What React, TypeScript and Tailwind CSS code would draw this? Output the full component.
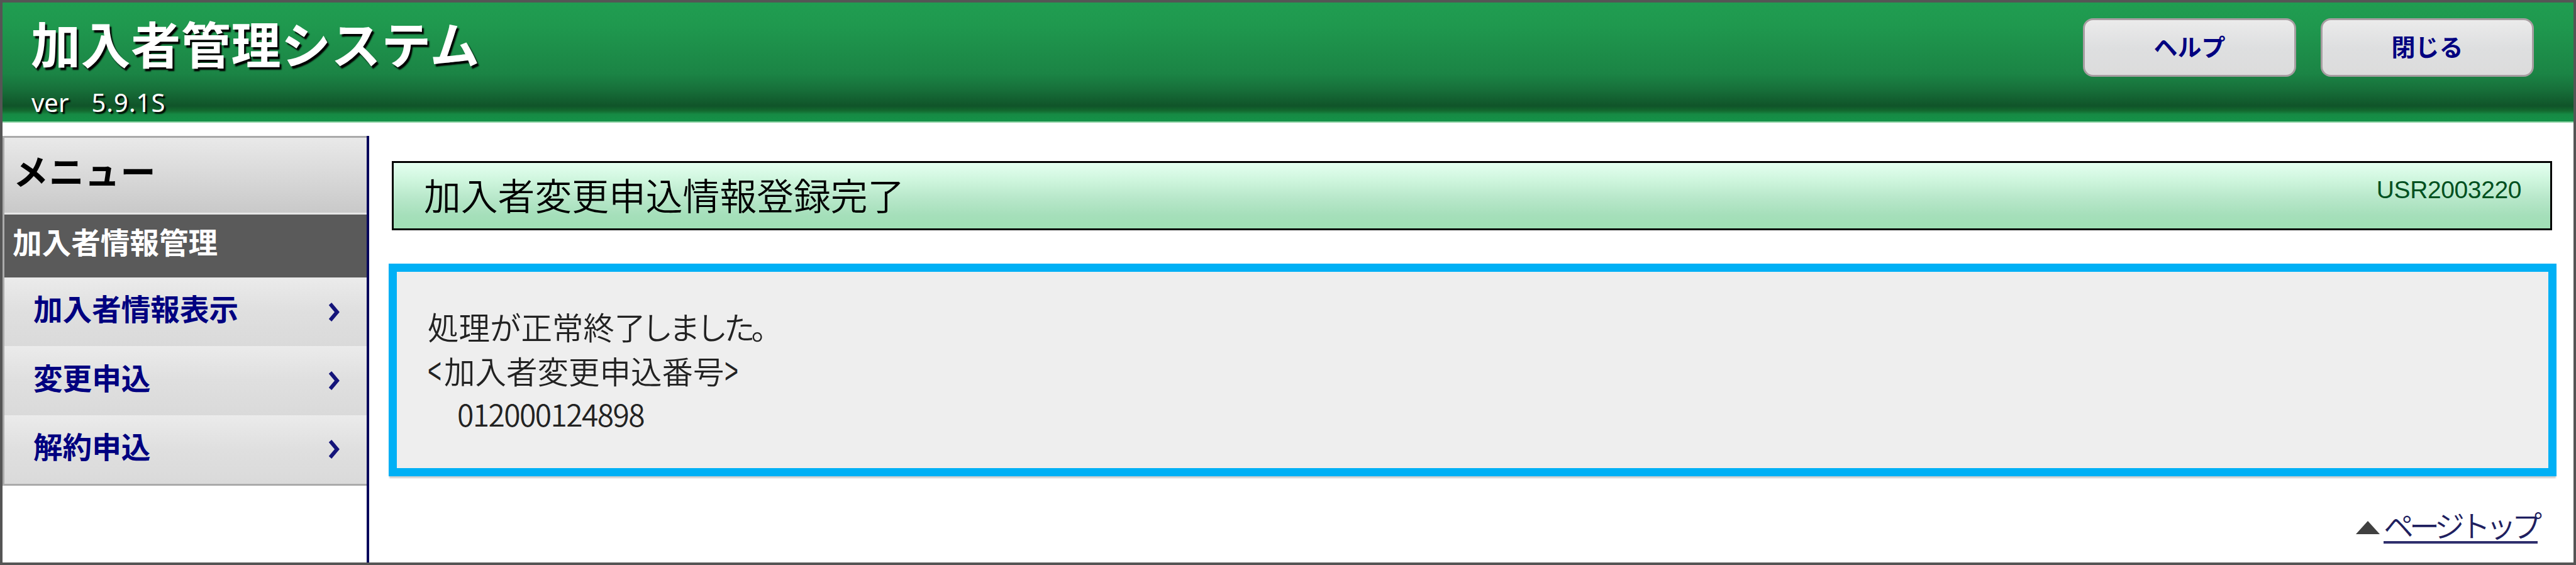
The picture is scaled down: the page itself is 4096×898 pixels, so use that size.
const menuItems = ['加入者情報表示', '変更申込', '解約申込'];

const headerButtons = ['ヘルプ', '閉じる'];

function Header() {
  return (
    <header className="flex h-[191px] shrink-0 items-start justify-between border-b-2 border-[#8fd3a6] bg-[linear-gradient(to_bottom,#209d51_0%,#1f984e_20%,#1b8445_60%,#17703a_73%,#105429_87%,#13692f_91%,#168a44_94%,#149248_100%)] pt-[25px] pr-[63px] pl-[45px] text-white">
      <div>
        <h1 className="-mt-[2px] text-[79px] leading-[82px] font-bold tracking-[0.6px] [text-shadow:3px_4px_2px_#000]">
          加入者管理システム
        </h1>
        <div className="mt-[31px] flex gap-[36px] pl-px font-['Noto_Sans'] text-[40px] leading-[46px] [text-shadow:3px_3px_2px_#000]">
          <span>ver</span>
          <span className="tracking-[1px]">5.9.1S</span>
        </div>
      </div>
      <div className="flex gap-[39px]">
        {headerButtons.map((label) => (
          <button
            key={label}
            className="h-[93px] w-[339px] rounded-[16px] border-[3px] border-[#a79da1] bg-linear-to-b from-[#ebebeb] via-[#dedfe0] to-[#dcdcdc] pb-[6px] text-[38px] leading-none font-bold text-[#000080]"
          >
            {label}
          </button>
        ))}
      </div>
    </header>
  );
}

function Chevron() {
  return (
    <svg viewBox="0 0 18 30" className="h-[30px] w-[18px]" fill="none" stroke="#14147a" strokeWidth="6">
      <path d="M2 2 L13 15 L2 28" />
    </svg>
  );
}

function Sidebar() {
  return (
    <aside className="w-[583px] shrink-0 border-r-4 border-[#08085c]">
      <nav className="border-y-[3px] border-l-[3px] border-[#aaaaaa]">
        <h2 className="flex h-[122px] items-center border-b-[3px] border-[#e6e6e6] bg-linear-to-b from-[#e9e9e9] to-[#c9c9c9] pb-[18px] pl-[14px] text-[56px] leading-none font-bold tracking-[0.8px] text-black">
          メニュー
        </h2>
        <h3 className="flex h-[100px] items-center bg-[#5a5a5a] pb-[16px] pl-[13px] text-[46.6px] leading-none font-bold text-white">
          加入者情報管理
        </h3>
        <ul>
          {menuItems.map((item) => (
            <li
              key={item}
              className="flex h-[109.4px] items-center justify-between bg-linear-to-b from-[#ebebeb] via-[#dfdfdf] to-[#dadada] pr-[42px] pl-[46px] text-[#000080]"
            >
              <span className="pb-[12px] text-[46.6px] leading-none font-bold">{item}</span>
              <Chevron />
            </li>
          ))}
        </ul>
      </nav>
    </aside>
  );
}

function Content() {
  return (
    <main className="min-w-0 flex-1 pt-[40px] pr-[27px] pl-[31px]">
      <div className="mr-[7px] ml-[5px] flex h-[110px] justify-between border-[3px] border-black bg-[linear-gradient(to_bottom,#e4fff0_0%,#cdf5dc_28%,#b9e8cb_52%,#a5dfba_80%,#a0dfb5_100%)] pr-[46px] pl-[48px]">
        <h2 className="pt-[20px] text-[58.8px] leading-[60px] font-[350] text-black">加入者変更申込情報登録完了</h2>
        <span className="pt-[23px] font-['Liberation_Sans'] text-[39px] leading-[40px] tracking-[-0.4px] text-[#00501f]">
          USR2003220
        </span>
      </div>

      <div className="mt-[53px] h-[338px] border-[13px] border-[#00b0f5] bg-[#eeeeee] pt-[52px] pl-[49px] text-[49.5px] leading-[69.5px] font-[350] text-[#222] shadow-[0_4px_2px_-1px_#cfcfcf]">
        <p>
          処理が正常終<span className="tracking-[-6px]">了しました。</span>
        </p>
        <p className="flex">
          <span className="w-[26px] origin-left scale-x-65 font-['Liberation_Sans'] text-[58px]">&lt;</span>
          <span>加入者変更申込番号</span>
          <span className="w-[26px] origin-left scale-x-65 font-['Liberation_Sans'] text-[58px]">&gt;</span>
        </p>
        <p className="pl-[47px] text-[48px] tracking-[-1.6px]">012000124898</p>
      </div>

      <div className="mt-[51px] mr-[30px] flex justify-end gap-[6px]">
        <svg viewBox="0 0 38 21" className="mt-[20px] h-[21px] w-[38px]" fill="#404040">
          <path d="M19 0 L38 21 H0 Z" />
        </svg>
        <a
          href="#"
          className="h-[56px] border-b-4 border-[#2f2f6d] text-[48px] leading-[50px] font-[350] tracking-[-7px] text-[#1f1f60]"
        >
          ページトップ
        </a>
      </div>
    </main>
  );
}

export default function App() {
  return (
    <div
      lang="ja"
      className="flex h-[898px] w-[4096px] flex-col overflow-hidden border-4 border-[#555555] bg-white font-['Noto_Sans_CJK_JP',sans-serif]"
    >
      <Header />
      <div className="mt-[21px] flex min-h-0 flex-1">
        <Sidebar />
        <Content />
      </div>
    </div>
  );
}
